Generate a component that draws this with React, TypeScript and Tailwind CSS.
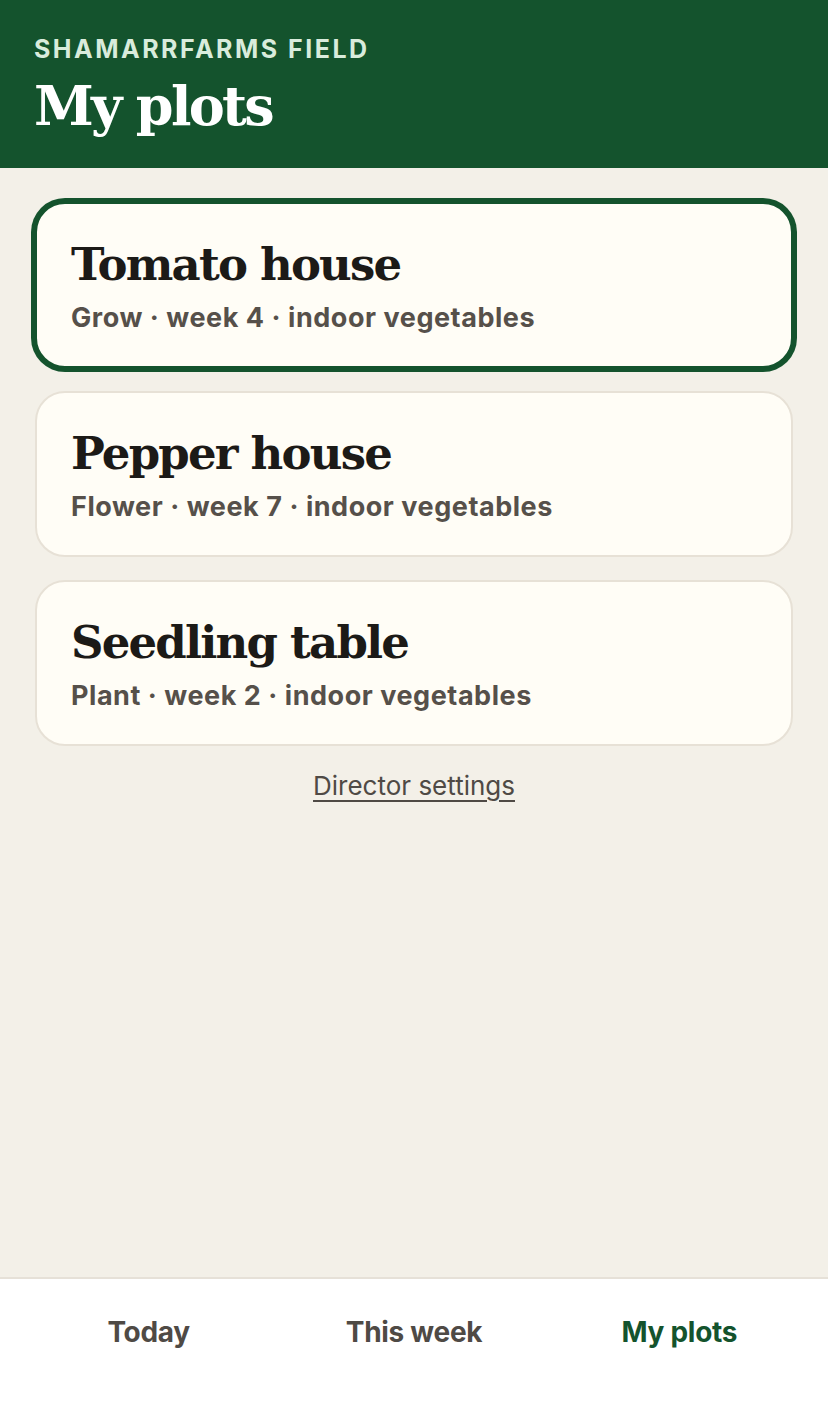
const PLOTS = [
  { name: 'Tomato house', stage: 'Grow', week: 4, kind: 'indoor vegetables', active: true },
  { name: 'Pepper house', stage: 'Flower', week: 7, kind: 'indoor vegetables', active: false },
  { name: 'Seedling table', stage: 'Plant', week: 2, kind: 'indoor vegetables', active: false },
]

const TABS = ['Today', 'This week', 'My plots']

const sans = "font-['Inter','Noto_Sans',sans-serif]"
const serif = "font-['DejaVu_Serif','Liberation_Serif',serif]"

export default function App() {
  return (
    <div className={`flex h-screen min-h-[1410px] flex-col bg-[#f3f0e8] ${sans}`}>
      {/* header */}
      <header className="h-[168px] shrink-0 bg-[#14532d] px-[34px] pt-[34px]">
        <div className="text-[25px] leading-[30px] font-bold tracking-[0.1em] text-[#d9ecdc]">
          SHAMARRFARMS FIELD
        </div>
        <h1 className={`${serif} mt-[12px] text-[54px] leading-[60px] font-bold tracking-[-0.05em] text-white`}>
          My plots
        </h1>
      </header>

      {/* plots */}
      <main className="flex-1 px-[35px] pt-[34px]">
        <div className="flex flex-col gap-[23px]">
          {PLOTS.map((p) => (
            <button
              key={p.name}
              className={`rounded-[30px] border-2 bg-[#fffdf6] px-[34px] pt-[34px] pb-[32px] text-left ${
                p.active ? 'border-[#14532d] ring-4 ring-[#14532d]' : 'border-[#e7e1d6]'
              }`}
            >
              <div className={`${serif} text-[45px] leading-[54px] font-bold tracking-[-0.04em] text-[#1c1a17]`}>
                {p.name}
              </div>
              <div className="mt-[10px] text-[27px] leading-[32px] font-bold tracking-[0.02em] text-[#56504a]">
                {p.stage} · week {p.week} · {p.kind}
              </div>
            </button>
          ))}
        </div>
        <div className="mt-[24px] text-center">
          <a href="#" className="text-[26px] leading-[32px] text-[#4f4a45] underline underline-offset-[5px]">
            Director settings
          </a>
        </div>
      </main>

      {/* bottom tabs */}
      <nav className="grid h-[133px] shrink-0 grid-cols-3 border-t-2 border-[#e6e1d8] bg-white px-4 pt-[36px]">
        {TABS.map((t) => (
          <button
            key={t}
            className={`self-start text-center text-[28px] leading-[34px] font-bold tracking-[-0.01em] ${
              t === 'My plots' ? 'text-[#14532d]' : 'text-[#4f4a45]'
            }`}
          >
            {t}
          </button>
        ))}
      </nav>
    </div>
  )
}
